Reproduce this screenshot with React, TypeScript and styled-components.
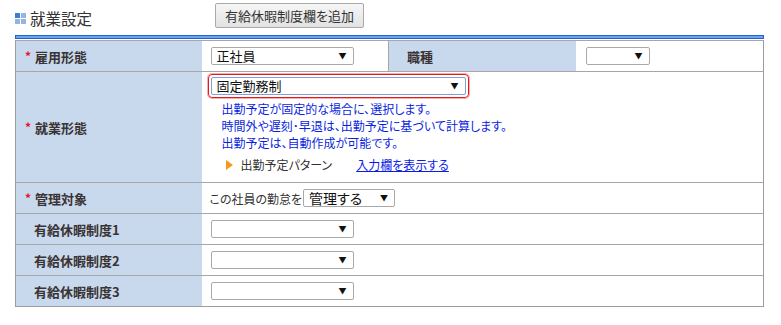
import React from "react";
import styled, { createGlobalStyle } from "styled-components";

const Global = createGlobalStyle`
  html, body { margin: 0; padding: 0; background: #fff; }
  body { font-family: "Noto Sans CJK JP", "Noto Sans", sans-serif; color: #333; }
`;

const Page = styled.div`
  width: 781px;
  height: 325px;
  padding: 0 17px 0 15px;
  box-sizing: border-box;
`;

const Header = styled.div`
  display: flex;
  align-items: center;
  height: 35px;
`;

const TitleIcon = styled.span`
  display: grid;
  grid-template-columns: 5px 5px;
  grid-template-rows: 5px 5px;
  gap: 1px;
  margin-right: 4px;
  margin-top: 1px;
`;

const Sq = styled.span<{ $dark?: boolean }>`
  background: ${(p) => (p.$dark ? "#3f7ecb" : "#93b5df")};
`;

const Title = styled.h2`
  margin: 0;
  font-size: 15.5px;
  font-weight: normal;
  color: #333;
  width: 185px;
  line-height: 20px;
`;

const AddButton = styled.button`
  font-family: inherit;
  font-size: 13px;
  color: #333;
  height: 25px;
  padding: 0 9px;
  margin-top: -5px;
  background: linear-gradient(#f6f6f6, #e2e2e2);
  border: 1px solid #a9a9a9;
  border-radius: 2px;
  font-feature-settings: "palt";
`;

const BlueBar = styled.div`
  height: 2px;
  border: 1px solid #1f63d6;
  background: #6fa3ea;
  margin-bottom: 1px;
`;

const Table = styled.table`
  width: 749px;
  border-collapse: collapse;
  border: 1px solid #9c9c9c;
  table-layout: fixed;
`;

const Row = styled.tr<{ $h?: number }>`
  height: ${(p) => p.$h ?? 31}px;
  border-top: 1px solid #a6a6a6;
`;

const Label = styled.th<{ $w?: number; $star?: boolean }>`
  background: #c9d9ed;
  text-align: left;
  font-size: 13px;
  font-weight: bold;
  color: #3a3333;
  padding: 0 0 0 ${(p) => (p.$star ? 9 : 18)}px;
  ${(p) => (p.$w ? `width: ${p.$w}px;` : "")}
  white-space: nowrap;
  box-sizing: border-box;
`;

const Star = styled.span`
  color: #e8102c;
  font-size: 12px;
  margin-right: 4px;
  position: relative;
  top: -1px;
`;

const Cell = styled.td<{ $w?: number; $pl?: number; $divider?: boolean }>`
  padding: 0 0 0 ${(p) => p.$pl ?? 9}px;
  ${(p) => (p.$w ? `width: ${p.$w}px;` : "")}
  ${(p) => (p.$divider ? "border-right: 1px solid #a6a6a6;" : "")}
  font-size: 12px;
  vertical-align: middle;
  box-sizing: border-box;
`;

const TopCell = styled(Cell)`
  vertical-align: top;
  padding-top: 1px;
`;

const Select = styled.div<{ $w: number; $focus?: boolean; $fs?: number }>`
  width: ${(p) => p.$w}px;
  height: 18px;
  box-sizing: border-box;
  border: 1px solid ${(p) => (p.$focus ? "#7f9fd6" : "#a9a9a9")};
  border-radius: 2px;
  background: #fff;
  display: flex;
  align-items: center;
  justify-content: space-between;
  padding: 0 6px 0 5px;
  font-size: ${(p) => p.$fs ?? 13}px;
  color: #111;
  line-height: 16px;
`;

const Arrow = styled.span`
  font-size: 8px;
  color: #111;
  line-height: 1;
`;

const FocusRing = styled.div`
  display: inline-block;
  padding: 2px;
  border: 1px solid #e31b1b;
  border-radius: 4px;
  box-shadow: 0 0 0 1px rgba(227, 27, 27, 0.35);
  margin-left: -3px;
  margin-top: 1px;
`;

const Help = styled.div`
  color: #0a1fe0;
  font-size: 12px;
  line-height: 17px;
  padding-left: 11px;
  margin-top: 2px;
  font-feature-settings: "palt";
`;

const PatternLine = styled.div`
  display: flex;
  align-items: center;
  padding-left: 15px;
  margin-top: 5px;
  font-size: 12px;
  font-feature-settings: "palt";
  color: #333;
`;

const Tri = styled.span`
  width: 0;
  height: 0;
  border-left: 7px solid #f39a1d;
  border-top: 5px solid transparent;
  border-bottom: 5px solid transparent;
  margin-right: 8px;
`;

const LinkText = styled.a`
  color: #0b1be6;
  text-decoration: underline;
  margin-left: 24px;
`;

const Inline = styled.div`
  display: flex;
  align-items: center;
  gap: 1px;
  font-size: 12px;
  color: #333;
  font-feature-settings: "palt";
`;

const rows = ["有給休暇制度1", "有給休暇制度2", "有給休暇制度3"];

export default function App() {
  return (
    <Page>
      <Global />
      <Header>
        <TitleIcon>
          <Sq $dark />
          <Sq />
          <Sq />
          <Sq />
        </TitleIcon>
        <Title>就業設定</Title>
        <AddButton>有給休暇制度欄を追加</AddButton>
      </Header>
      <BlueBar />
      <Table>
        <tbody>
          <Row $h={31}>
            <Label $star $w={186}>
              <Star>*</Star>雇用形態
            </Label>
            <Cell $w={187} $divider>
              <Select $w={143}>
                正社員<Arrow>▼</Arrow>
              </Select>
            </Cell>
            <Label $w={187}>職種</Label>
            <Cell $pl={10}>
              <Select $w={64}>
                <span />
                <Arrow>▼</Arrow>
              </Select>
            </Cell>
          </Row>
          <Row $h={111}>
            <Label $star>
              <Star>*</Star>就業形態
            </Label>
            <TopCell colSpan={3}>
              <FocusRing>
                <Select $w={255} $focus $fs={13}>
                  固定勤務制<Arrow>▼</Arrow>
                </Select>
              </FocusRing>
              <Help>
                出勤予定が固定的な場合に、選択します。
                <br />
                時間外や遅刻･早退は、出勤予定に基づいて計算します。
                <br />
                出勤予定は、自動作成が可能です。
              </Help>
              <PatternLine>
                <Tri />
                出勤予定パターン
                <LinkText href="#">入力欄を表示する</LinkText>
              </PatternLine>
            </TopCell>
          </Row>
          <Row $h={31}>
            <Label $star>
              <Star>*</Star>管理対象
            </Label>
            <Cell colSpan={3} $pl={8}>
              <Inline>
                この社員の勤怠を
                <Select $w={92} $fs={14}>
                  管理する<Arrow>▼</Arrow>
                </Select>
              </Inline>
            </Cell>
          </Row>
          {rows.map((r) => (
            <Row key={r} $h={31}>
              <Label>{r}</Label>
              <Cell colSpan={3}>
                <Select $w={143}>
                  <span />
                  <Arrow>▼</Arrow>
                </Select>
              </Cell>
            </Row>
          ))}
        </tbody>
      </Table>
    </Page>
  );
}
